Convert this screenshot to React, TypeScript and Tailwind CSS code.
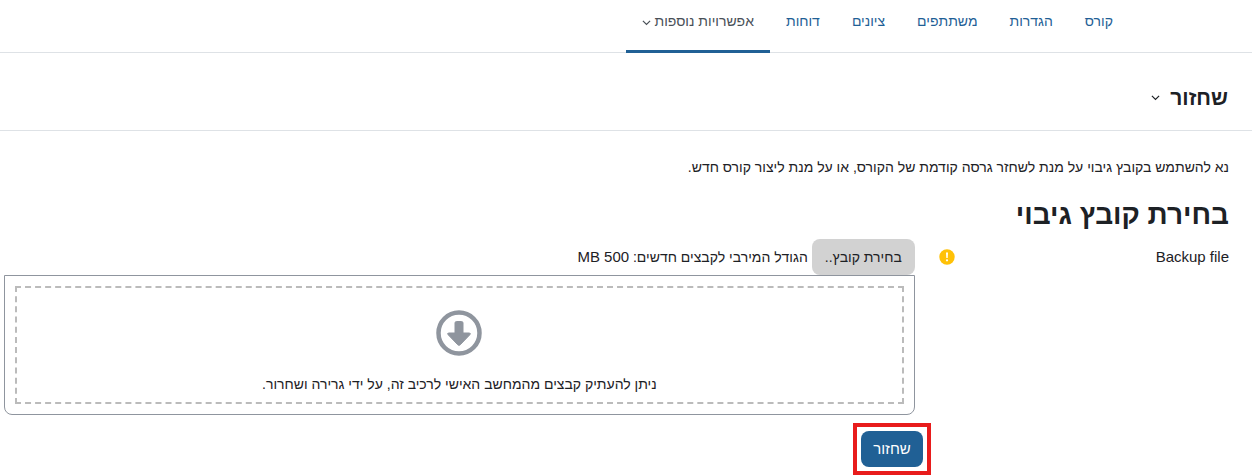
const tabs = ["קורס", "הגדרות", "משתתפים", "ציונים", "דוחות"];

function Chevron() {
  return (
    <svg
      viewBox="0 0 9 9"
      className="h-[9px] w-[9px] shrink-0"
      fill="none"
      stroke="currentColor"
      strokeWidth="1.2"
      aria-hidden="true"
    >
      <path d="M.9 2.800 4.500 6.400l3.600-3.600" />
    </svg>
  );
}

function CourseNav() {
  return (
    <nav className="flex h-[53px] border-b border-[#dee2e6] pr-[123px] text-sm text-[#1f5f96]">
      {tabs.map((tab) => (
        <a key={tab} href="#" className="h-[53px] px-4 pt-[11px] leading-5">
          {tab}
        </a>
      ))}
      <button
        type="button"
        className="flex h-[53px] items-start gap-[3px] border-b-3 border-[#206095] px-4 pt-[11px] leading-5 text-[#495057]"
      >
        אפשרויות נוספות
        <span className="pt-[7px]">
          <Chevron />
        </span>
      </button>
    </nav>
  );
}

function PageHeader() {
  return (
    <header className="flex h-[78px] items-center border-b border-[#dee2e6] pt-3 pr-6">
      <h1 className="text-[21px] leading-7 font-bold">
        <button type="button" className="flex items-center gap-[10px]">
          שחזור
          <Chevron />
        </button>
      </h1>
    </header>
  );
}

function FilePicker() {
  return (
    <div className="min-w-0 flex-1">
      <div className="flex items-center gap-1">
        <button
          id="backup-file"
          type="button"
          className="h-9 rounded-lg bg-[#d2d2d2] px-[13px] text-sm"
        >
          בחירת קובץ..
        </button>
        <span className="text-sm">
          הגודל המירבי לקבצים חדשים: <span className="text-[15px]">500 MB</span>
        </span>
      </div>

      <div className="rounded-b-lg border border-[#8f959e] p-[10px]">
        <div className="flex h-[118px] flex-col items-center border-2 border-dashed border-[#bbb] pt-[22px]">
          <svg viewBox="0 0 46 46" className="h-[46px] w-[46px] shrink-0 text-[#8f959e]" aria-hidden="true">
            <circle cx="23" cy="23" r="20.5" fill="none" stroke="currentColor" strokeWidth="4.5" />
            <path
              d="M20.5 11.5h5q1.500 0 1.500 1.500v10h6q2.200 0 .8 1.800l-9.600 10q-1.200 1.100-2.400 0l-9.600-10q-1.400-1.800.8-1.800h6V13q0-1.500 1.500-1.500z"
              fill="currentColor"
              stroke="currentColor"
              strokeWidth="1"
            />
          </svg>
          <p className="mt-[18px] text-sm leading-5">
            ניתן להעתיק קבצים מהמחשב האישי לרכיב זה, על ידי גרירה ושחרור.
          </p>
        </div>
      </div>
    </div>
  );
}

export default function App() {
  return (
    <div
      dir="rtl"
      className="mr-2 bg-white font-['Liberation_Sans',Arial,sans-serif] text-[15px] leading-6 text-[#1d2125]"
    >
      <CourseNav />
      <PageHeader />

      <main className="pt-6 pr-[23px] pl-1">
        <p className="text-sm leading-6">
          נא להשתמש בקובץ גיבוי על מנת לשחזר גרסה קודמת של הקורס, או על מנת ליצור קורס חדש.
        </p>
        <h2 className="mt-[18px] text-[28px] leading-9 font-bold">בחירת קובץ גיבוי</h2>

        <form onSubmit={(event) => event.preventDefault()}>
          <div className="mt-[6px] flex gap-2">
            <div className="flex w-1/4 shrink-0 items-start justify-between pt-[6px] pl-4">
              <label htmlFor="backup-file">Backup file</label>
              <svg viewBox="0 0 16 16" className="mt-1 h-4 w-4" role="img" aria-label="חובה">
                <circle cx="8" cy="8" r="7.7" fill="#ffc107" />
                <path d="M7 3.500h2l-.3 5.500H7.300z" fill="#fff" />
                <circle cx="8" cy="11.300" r="1.100" fill="#fff" />
              </svg>
            </div>
            <FilePicker />
          </div>

          <div className="mt-2 flex">
            <div className="w-1/4 shrink-0" />
            <div className="-mr-2 border-4 border-[#e81c1c] p-1">
              <button
                type="submit"
                className="h-9 rounded-lg bg-[#206095] px-3 text-[15px] text-white"
              >
                שחזור
              </button>
            </div>
          </div>
        </form>
      </main>
    </div>
  );
}
